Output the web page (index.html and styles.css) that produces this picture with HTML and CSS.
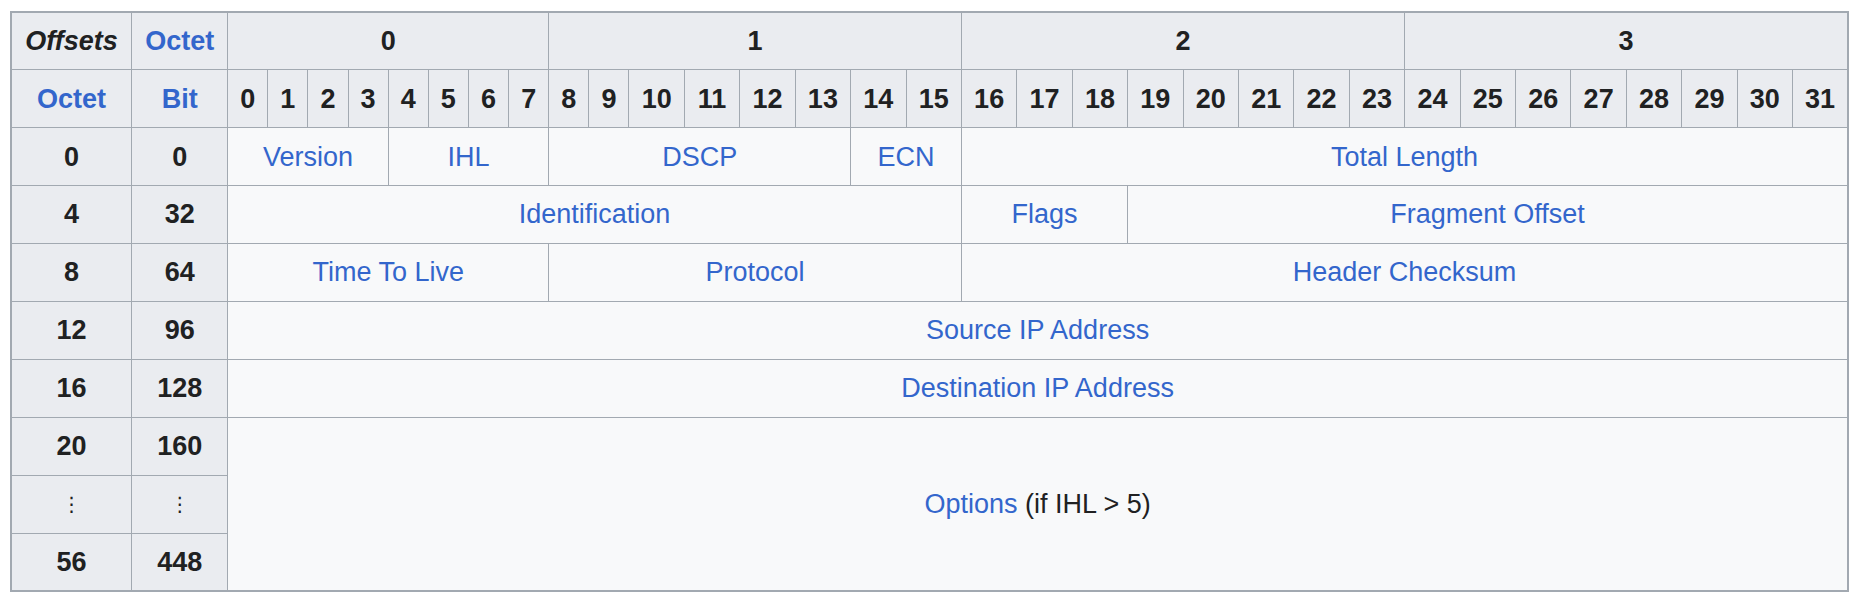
FILE: index.html
```html
<!DOCTYPE html>
<html lang="en">
<head>
<meta charset="utf-8">
<title>IPv4 header format</title>
<link rel="stylesheet" href="styles.css">
</head>
<body>
<table class="ip">
  <colgroup>
    <col class="c-off">
    <col class="c-oct">
    <col class="c-b1" span="10">
    <col class="c-b2" span="22">
  </colgroup>
  <tr>
    <th class="offsets">Offsets</th>
    <th><a class="lk">Octet</a></th>
    <th colspan="8">0</th>
    <th colspan="8">1</th>
    <th colspan="8">2</th>
    <th colspan="8">3</th>
  </tr>
  <tr>
    <th><a class="lk">Octet</a></th>
    <th><a class="lk">Bit</a></th>
    <th>0</th><th>1</th><th>2</th><th>3</th><th>4</th><th>5</th><th>6</th><th>7</th>
    <th>8</th><th>9</th><th>10</th><th>11</th><th>12</th><th>13</th><th>14</th><th>15</th>
    <th>16</th><th>17</th><th>18</th><th>19</th><th>20</th><th>21</th><th>22</th><th>23</th>
    <th>24</th><th>25</th><th>26</th><th>27</th><th>28</th><th>29</th><th>30</th><th>31</th>
  </tr>
  <tr>
    <th>0</th><th>0</th>
    <td colspan="4"><a class="lk">Version</a></td>
    <td colspan="4"><a class="lk">IHL</a></td>
    <td colspan="6"><a class="lk">DSCP</a></td>
    <td colspan="2"><a class="lk">ECN</a></td>
    <td colspan="16"><a class="lk">Total Length</a></td>
  </tr>
  <tr>
    <th>4</th><th>32</th>
    <td colspan="16"><a class="lk">Identification</a></td>
    <td colspan="3"><a class="lk">Flags</a></td>
    <td colspan="13"><a class="lk">Fragment Offset</a></td>
  </tr>
  <tr>
    <th>8</th><th>64</th>
    <td colspan="8"><a class="lk">Time To Live</a></td>
    <td colspan="8"><a class="lk">Protocol</a></td>
    <td colspan="16"><a class="lk">Header Checksum</a></td>
  </tr>
  <tr>
    <th>12</th><th>96</th>
    <td colspan="32"><a class="lk">Source IP Address</a></td>
  </tr>
  <tr>
    <th>16</th><th>128</th>
    <td colspan="32"><a class="lk">Destination IP Address</a></td>
  </tr>
  <tr>
    <th>20</th><th>160</th>
    <td colspan="32" rowspan="3"><a class="lk">Options</a> (if IHL &gt; 5)</td>
  </tr>
  <tr>
    <th class="dots">&#8942;</th><th class="dots">&#8942;</th>
  </tr>
  <tr>
    <th>56</th><th>448</th>
  </tr>
</table>
</body>
</html>
```

FILE: styles.css
```css
html, body {
  margin: 0;
  padding: 0;
  background: #ffffff;
}

body {
  padding: 11px 0 0 10px;
  font-family: "Liberation Sans", Arial, Helvetica, sans-serif;
  font-size: 27px;
  color: #202122;
}

.ip {
  border-collapse: collapse;
  table-layout: fixed;
  width: 1839px;
  border: 2px solid #a2a9b1;
  background: #f8f9fa;
}

.c-off { width: 120.7px; }
.c-oct { width: 96px; }
.c-b1 { width: 40.13px; }
.c-b2 { width: 55.41px; }

.ip tr {
  height: 57.9px;
}

.ip th,
.ip td {
  border: 1px solid #a2a9b1;
  padding: 0 4px;
  text-align: center;
  vertical-align: middle;
  white-space: nowrap;
  line-height: 1.2;
}

.ip th {
  background: #eaecf0;
  font-weight: bold;
  color: #202122;
}

.ip td {
  background: #f8f9fa;
  font-weight: normal;
  color: #202122;
}

.ip .offsets {
  font-style: italic;
}

.ip .dots {
  font-weight: normal;
  font-family: "DejaVu Sans", sans-serif;
  font-size: 20px;
}

.lk {
  color: #3366cc;
  text-decoration: none;
}
```
